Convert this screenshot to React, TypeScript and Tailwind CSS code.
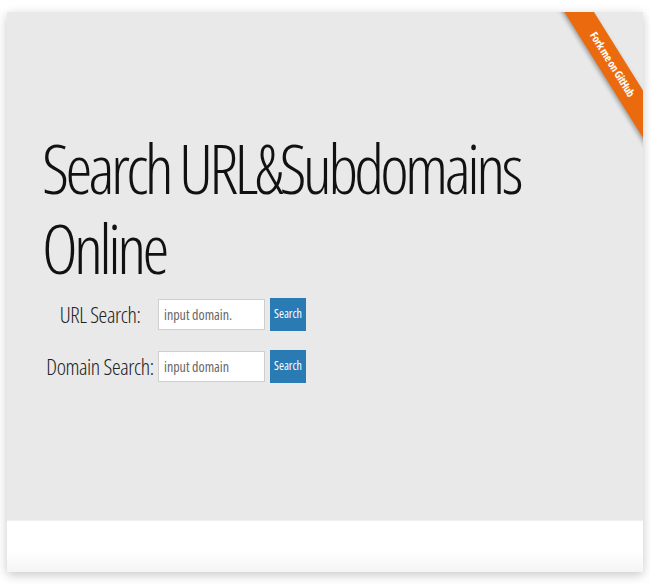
import React from "react";

const font = "font-['Open_Sans','Liberation_Sans',sans-serif]";

const SearchRow = ({ label, placeholder }: { label: string; placeholder: string }) => {
  return (
    <div className="flex items-center h-[52px]">
      <div className="w-[116px] text-center text-[22px] font-light text-[#222] font-stretch-condensed tracking-[-0.4px]">
        {label}
      </div>
      <input
        type="text"
        placeholder={placeholder}
        className="w-[107px] h-[31px] bg-white border border-[#cfcfcf] px-[5px] text-[14px] font-stretch-condensed text-[#666] placeholder:text-[#666] outline-none"
      />
      <button className="ml-[5px] w-[36px] h-[33px] bg-[#2a7ab3] text-white text-[12px] font-stretch-condensed">
        Search
      </button>
    </div>
  );
};

export default function App() {
  return (
    <div className={`w-[650px] h-[585px] bg-white pt-[12px] px-[7px] ${font}`}>
      <div className="relative w-[636px] h-[560px] overflow-hidden shadow-[0_3px_10px_rgba(0,0,0,0.22)] flex flex-col">
        <div className="h-[508px] bg-[#e9e9e9] pl-[35px] pt-[116px]">
          <h1 className="text-[68px] leading-[80px] font-light text-[#111] font-stretch-condensed tracking-[-3.7px] w-[520px]">
            Search URL&amp;Subdomains Online
          </h1>
          <div className="pt-0">
            <SearchRow label="URL Search:" placeholder="input domain." />
            <SearchRow label="Domain Search:" placeholder="input domain" />
          </div>
        </div>
        <div className="flex-1 bg-gradient-to-b from-white from-60% to-[#f5f5f5] border-t border-[#f0f0f0]" />

        {/* ribbon */}
        <div className="absolute left-[495px] top-[40px] w-[220px] h-[25px] rotate-[58deg] bg-[#ec6a0e] shadow-[0_2px_4px_rgba(0,0,0,0.35)] flex items-center justify-center">
          <span className="text-white text-[11px] font-bold font-stretch-condensed tracking-[-0.3px]">
            Fork me on GitHub
          </span>
        </div>
      </div>
    </div>
  );
}
